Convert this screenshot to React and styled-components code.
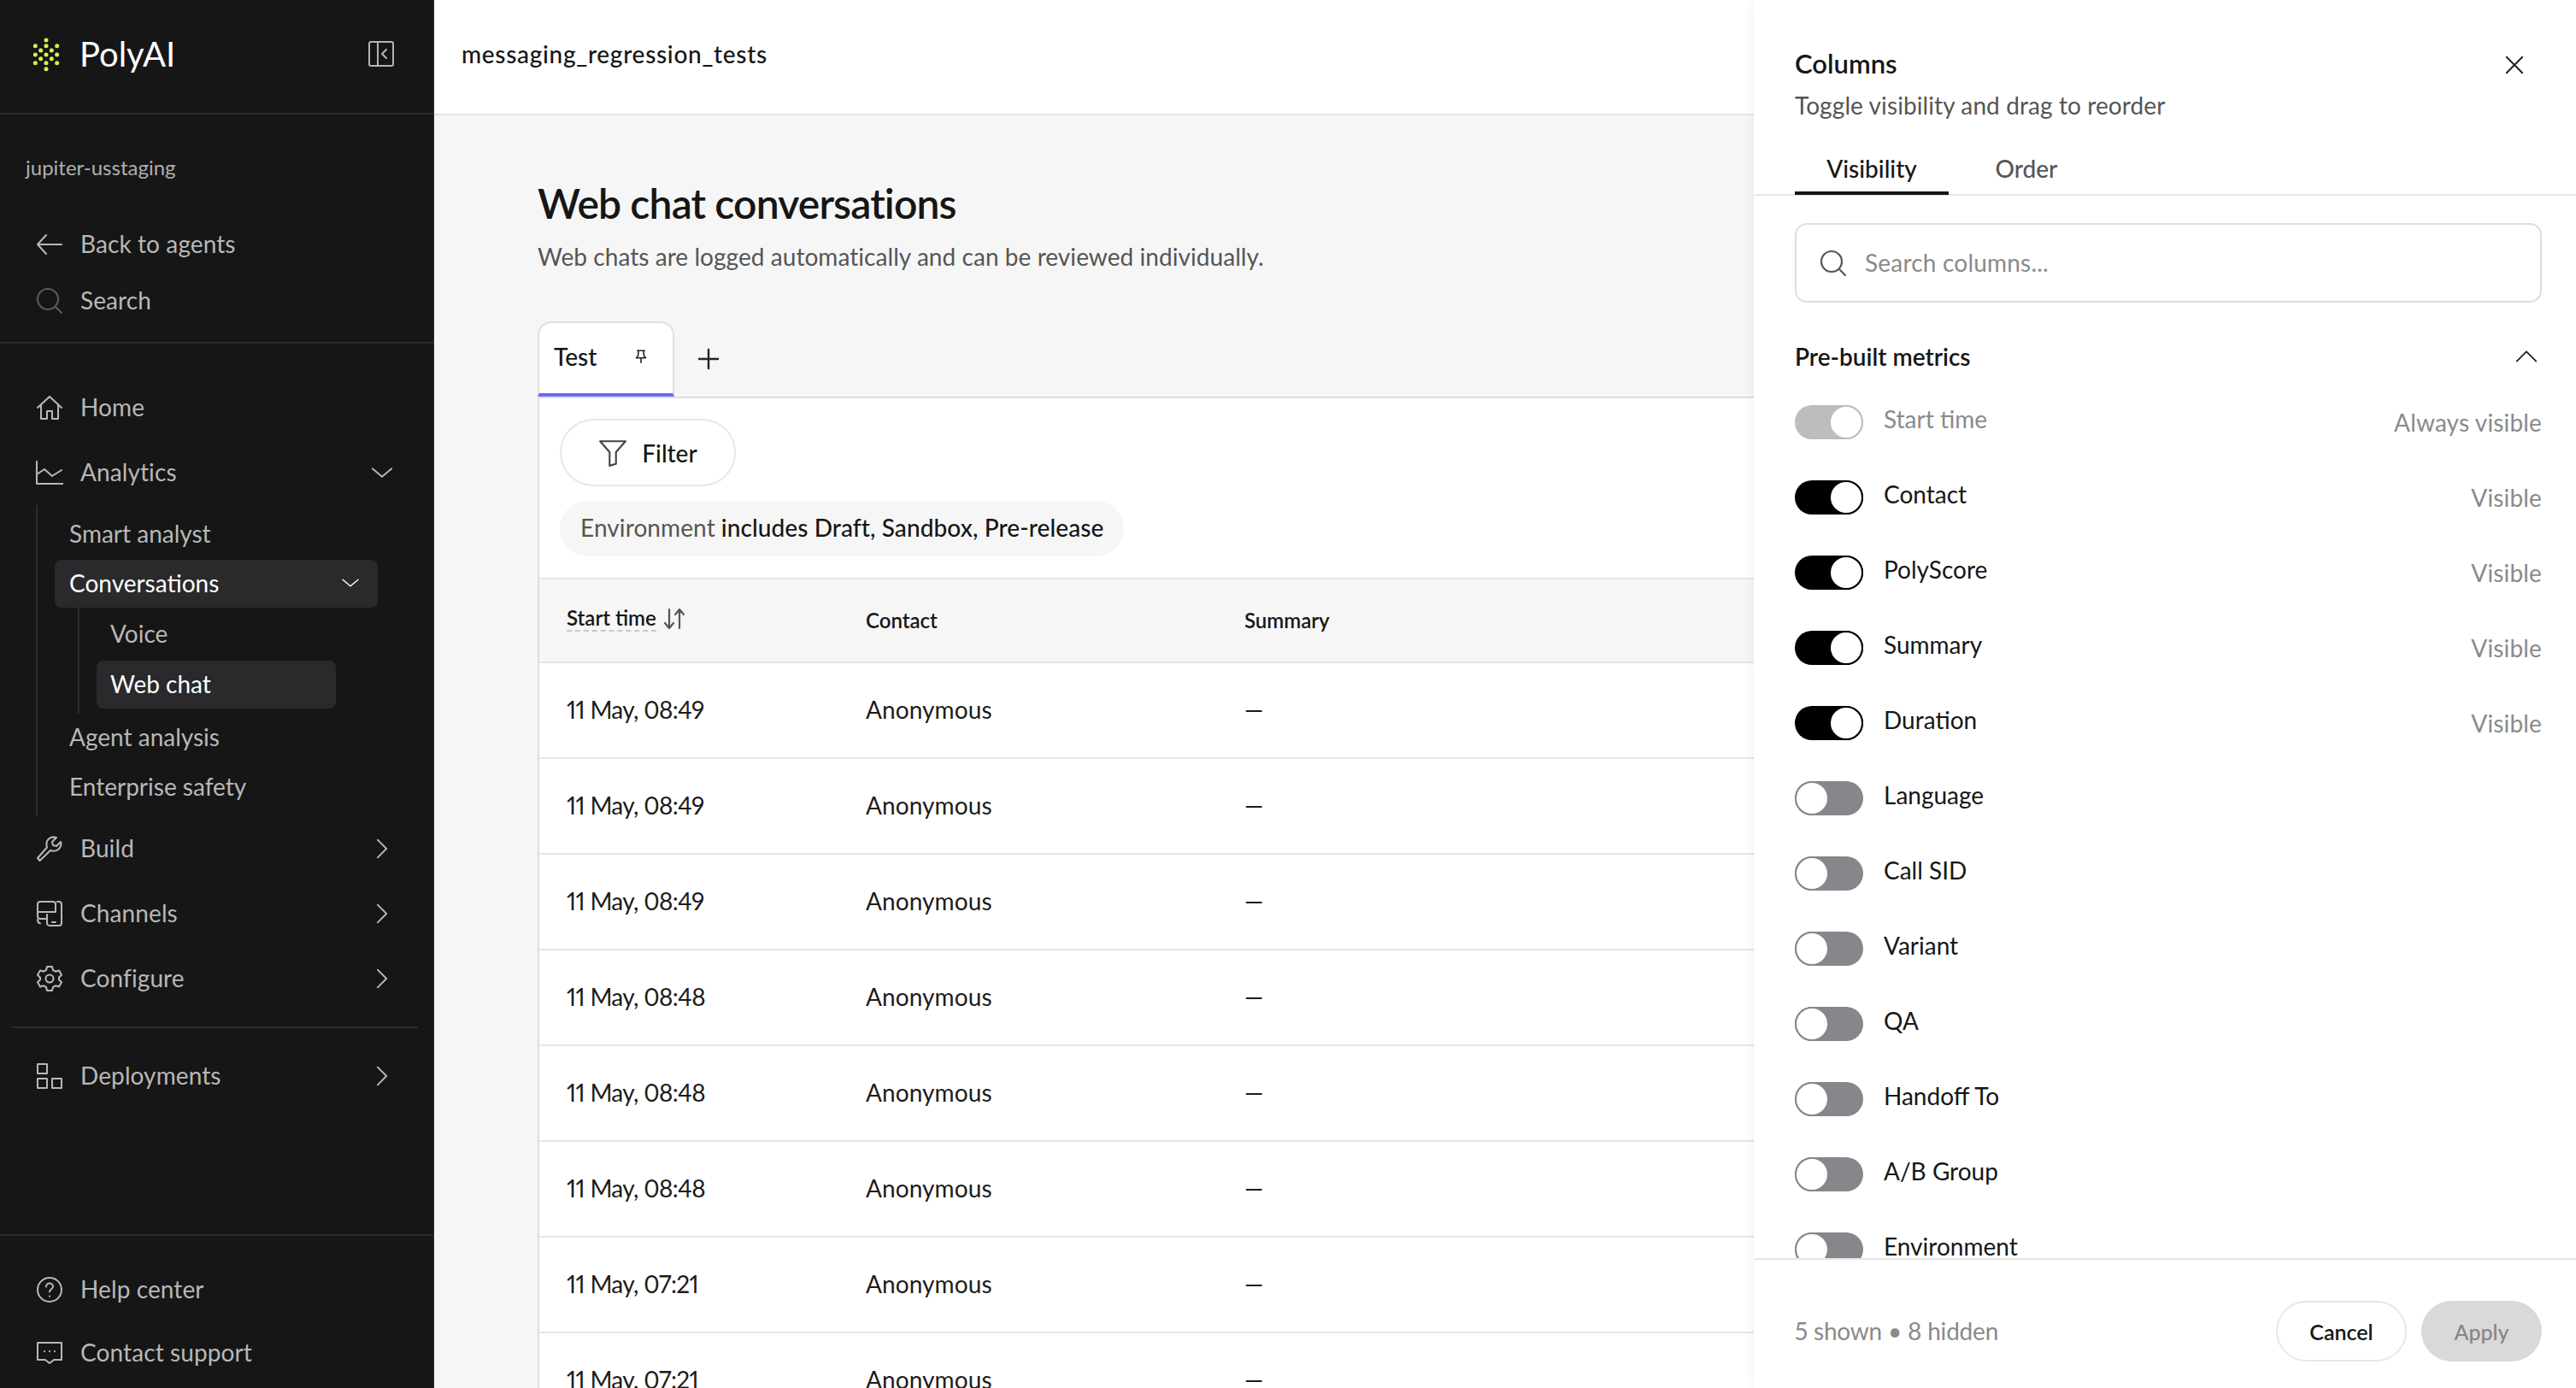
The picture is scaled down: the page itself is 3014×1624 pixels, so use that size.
import React from "react";
import styled, { createGlobalStyle } from "styled-components";

const FONT = `Lato, "Open Sans", "Liberation Sans", sans-serif`;

const Global = createGlobalStyle`
  html, body { margin: 0; padding: 0; width: 3014px; height: 1624px; overflow: hidden; background: #f6f6f6; }
  * { box-sizing: border-box; }
  body { font-family: ${FONT}; color: #161616; -webkit-font-smoothing: antialiased; font-feature-settings: "pnum" 1; }
`;

const Page = styled.div`
  position: relative;
  display: flex;
  width: 3014px;
  height: 1624px;
  overflow: hidden;
`;

/* ---------- sidebar ---------- */
const Sidebar = styled.aside`
  flex: 0 0 508px;
  height: 1624px;
  display: flex;
  flex-direction: column;
  background: #161616;
  border-right: 1px solid #2a2a2a;
  color: #b8b8b8;
`;
const Brand = styled.div`
  height: 134px;
  flex: none;
  display: flex;
  align-items: center;
  padding: 0 45px 6px 30px;
  border-bottom: 2px solid #2b2b2b;
`;
const BrandName = styled.span`
  margin-left: 13px;
  font-size: 40px;
  line-height: 48px;
  color: #fff;
  flex: 1;
`;
const Workspace = styled.div`
  padding: 46px 30px 0;
  font-size: 24px;
  line-height: 32px;
  color: #b0b0b0;
  height: 119px;
  flex: none;
`;
const TopNav = styled.div`
  flex: none;
  border-bottom: 2px solid #2b2b2b;
  padding-bottom: 15px;
`;
const NavRow = styled.div`
  height: ${(p) => p.$h || 76}px;
  flex: none;
  display: flex;
  align-items: center;
  padding: 0 45px 0 42px;
  font-size: 28px;
  letter-spacing: 0.1px;
  svg.lead { flex: none; margin-right: 20px; }
  span { flex: 1; padding-bottom: 3px; }
`;
const MainNav = styled.nav`
  flex: none;
  padding-top: 37px;
`;
const SubList = styled.div`
  margin-left: 42px;
  padding: 6px 0 4px 20px;
  border-left: 2px solid #2b2b2b;
  width: 402px;
`;
const SubItem = styled.div`
  width: ${(p) => (p.$inner ? 280 : 378)}px;
  height: 56px;
  margin-bottom: ${(p) => (p.$gap === undefined ? 2 : p.$gap)}px;
  display: flex;
  align-items: center;
  justify-content: space-between;
  padding: 0 20px 3px ${(p) => (p.$inner ? 16 : 17)}px;
  border-radius: 8px;
  background: ${(p) => (p.$active ? "#2a2a2c" : "transparent")};
  color: ${(p) => (p.$active ? "#fff" : "#b8b8b8")};
  font-size: 28px;
`;
const InnerList = styled.div`
  margin-left: 27px;
  padding: 3px 0 6px 20px;
  border-left: 2px solid #2b2b2b;
`;
const NavDivider = styled.div`
  height: 2px;
  margin: 18px 18px 18px 14px;
  background: #2b2b2b;
`;
const FootNav = styled.div`
  margin-top: auto;
  padding: 26px 0 4px;
  border-top: 2px solid #2b2b2b;
`;

/* ---------- main ---------- */
const Main = styled.main`
  flex: 1;
  min-width: 0;
  display: flex;
  flex-direction: column;
`;
const TopBar = styled.header`
  height: 135px;
  flex: none;
  display: flex;
  align-items: center;
  padding: 0 0 8px 32px;
  background: #fff;
  border-bottom: 2px solid #e4e4e4;
  font-size: 28px;
  font-weight: 500;
  letter-spacing: 0.7px;
`;
const Content = styled.div`
  padding: 73px 0 0 121px;
  flex: 1;
  min-height: 0;
`;
const Title = styled.h1`
  margin: 0;
  font-size: 48px;
  line-height: 60px;
  font-weight: 600;
  letter-spacing: -0.85px;
  color: #161616;
`;
const Lead = styled.p`
  margin: 14px 0 0;
  font-size: 28px;
  line-height: 36px;
  color: #555;
  letter-spacing: 0.06px;
`;
const TabBar = styled.div`
  margin-top: 58px;
  height: 90px;
  display: flex;
  align-items: flex-start;
  border-bottom: 2px solid #dedede;
`;
const ViewTab = styled.div`
  width: 160px;
  height: 88px;
  display: flex;
  align-items: center;
  justify-content: space-between;
  padding: 0 30px 4px 17px;
  background: #fff;
  border: 2px solid #dedede;
  border-bottom: 4px solid #6b68f5;
  border-radius: 16px 16px 0 0;
  font-size: 28px;
  font-weight: 500;
`;
const AddTab = styled.div`
  height: 88px;
  margin-left: 27px;
  display: flex;
  align-items: center;
  color: #222;
`;
const Card = styled.section`
  background: #fff;
  border-left: 2px solid #dedede;
  height: 1200px;
`;
const FilterArea = styled.div`
  padding: 24px 24px 25px;
  display: flex;
  flex-direction: column;
  align-items: flex-start;
  gap: 17px;
  border-bottom: 2px solid #e6e6e6;
`;
const FilterButton = styled.button`
  height: 79px;
  width: 206px;
  display: flex;
  align-items: center;
  justify-content: center;
  gap: 17px;
  border: 2px solid #e8e8e8;
  border-radius: 40px;
  background: #fff;
  font: 500 28px ${FONT};
  color: #161616;
`;
const Chip = styled.div`
  height: 65px;
  display: flex;
  align-items: center;
  gap: 7px;
  padding: 0 24px 3px;
  border-radius: 33px;
  background: #f6f6f6;
  font-size: 28px;
  color: #555;
  letter-spacing: 0.1px;
  b { font-weight: 500; color: #161616; }
`;
const HeadRow = styled.div`
  height: 98px;
  display: grid;
  grid-template-columns: 350px 443px 1fr;
  align-items: center;
  padding: 0 0 1px 32px;
  background: #f6f6f6;
  border-bottom: 2px solid #e6e6e6;
  font-size: 24px;
  font-weight: 600;
`;
const SortHead = styled.div`
  display: flex;
  align-items: center;
  gap: 8px;
  margin-top: -4px;
  span { border-bottom: 2px dashed #c8c8c8; line-height: 28px; }
`;
const Row = styled.div`
  height: 112px;
  display: grid;
  grid-template-columns: 350px 443px 1fr;
  align-items: center;
  padding: 0 0 3px 32px;
  border-bottom: 2px solid #e6e6e6;
  font-size: 28px;
  letter-spacing: 0.1px;
  color: #1c1c1c;
`;
const TimeCell = styled.div`
  letter-spacing: -0.65px;
`;

/* ---------- drawer ---------- */
const Drawer = styled.aside`
  position: absolute;
  top: 0;
  right: 0;
  bottom: 0;
  width: 962px;
  display: flex;
  flex-direction: column;
  background: #fff;
  box-shadow: 0 0 12px rgba(0, 0, 0, 0.07);
`;
const DrawerHead = styled.div`
  flex: none;
  padding: 55px 40px 0 48px;
`;
const DrawerTitleRow = styled.div`
  display: flex;
  align-items: center;
  justify-content: space-between;
  height: 38px;
`;
const DrawerTitle = styled.h2`
  margin: 0;
  font-size: 31px;
  font-weight: 600;
  line-height: 38px;
  color: #161616;
`;
const CloseIcon = styled.svg`
  margin: 3px 21px 0 0;
`;
const DrawerLead = styled.p`
  margin: 12px 0 0;
  font-size: 28px;
  line-height: 36px;
  color: #555;
  letter-spacing: 0.1px;
`;
const DrawerTabs = styled.div`
  flex: none;
  height: 88px;
  padding: 29px 0 0 48px;
  display: flex;
  border-bottom: 2px solid #e6e6e6;
`;
const DrawerTab = styled.div`
  width: ${(p) => p.$w}px;
  height: 58px;
  display: flex;
  align-items: center;
  justify-content: center;
  border-bottom: 4px solid ${(p) => (p.$active ? "#161616" : "transparent")};
  font-size: 28px;
  font-weight: 500;
  color: ${(p) => (p.$active ? "#161616" : "#555")};
`;
const DrawerBody = styled.div`
  flex: 1;
  min-height: 0;
  overflow: hidden;
  padding: 32px 40px 0 48px;
`;
const SearchBox = styled.div`
  height: 93px;
  display: flex;
  align-items: center;
  gap: 21px;
  padding: 0 27px;
  border: 2px solid #dedede;
  border-radius: 14px;
  font-size: 28px;
  color: #8a8a8a;
  letter-spacing: 0.2px;
`;
const SearchText = styled.span`
  padding-bottom: 2px;
`;
const SectionHead = styled.div`
  margin-top: 43px;
  height: 40px;
  display: flex;
  align-items: center;
  justify-content: space-between;
  padding-right: 3px;
  font-size: 28px;
  font-weight: 600;
  color: #161616;
`;
const ToggleList = styled.div`
  margin-top: 13px;
`;
const ToggleRow = styled.div`
  height: 88px;
  display: flex;
  align-items: center;
`;
const Track = styled.span`
  flex: none;
  position: relative;
  width: 80px;
  height: 40px;
  border-radius: 20px;
  background: ${(p) => (p.$state === "on" ? "#000" : p.$state === "locked" ? "#bdbdbd" : "#87878b")};
`;
const Knob = styled.span`
  position: absolute;
  top: 0;
  ${(p) => (p.$state === "off" ? "left: 0" : "right: 0")};
  width: 40px;
  height: 40px;
  border-radius: 50%;
  background: #fff;
  border: 2px solid ${(p) => (p.$state === "on" ? "#000" : p.$state === "locked" ? "#bdbdbd" : "#87878b")};
`;
const ToggleLabel = styled.span`
  flex: 1;
  margin-left: 24px;
  padding-bottom: 9px;
  font-size: 28px;
  line-height: 36px;
  color: ${(p) => (p.$state === "locked" ? "#8a8a8a" : "#161616")};
`;
const ToggleStatus = styled.span`
  font-size: 28px;
  color: #8a8a8a;
  letter-spacing: 0.15px;
`;
const DrawerFoot = styled.div`
  flex: none;
  height: 152px;
  display: flex;
  align-items: flex-start;
  padding: 48px 40px 0 48px;
  border-top: 2px solid #e6e6e6;
  background: #fff;
`;
const FootCount = styled.span`
  flex: 1;
  line-height: 71px;
  font-size: 28px;
  letter-spacing: -0.2px;
  color: #8a8a8a;
`;
const CancelButton = styled.button`
  width: 153px;
  height: 71px;
  border: 2px solid #e8e8e8;
  border-radius: 36px;
  background: #fff;
  font: 600 25px ${FONT};
  color: #161616;
`;
const ApplyButton = styled.button`
  width: 141px;
  height: 71px;
  margin-left: 17px;
  border: 0;
  border-radius: 36px;
  background: #d9d9d9;
  font: 500 25px ${FONT};
  color: #858585;
`;

/* ---------- icons ---------- */
const Ico = ({ size = 32, sw = 1.5, children, ...r }) => (
  <svg className="lead" width={size} height={size} viewBox="0 0 32 32" fill="none" stroke="currentColor" strokeWidth={sw * 1.35} strokeLinecap="round" strokeLinejoin="round" {...r}>
    {children}
  </svg>
);
const ChevSvg = styled.svg`
  flex: none;
`;
const Chev = ({ dir = "right", size = 32, color }) => (
  <ChevSvg width={size} height={size} viewBox="0 0 32 32" fill="none" stroke={color || "currentColor"} strokeWidth="2" strokeLinecap="round" strokeLinejoin="round">
    {dir === "right" && <path d="M10.5 5l11 11-11 11" />}
    {dir === "down" && <path d="M4 11l12 10 12-10" />}
    {dir === "up" && <path d="M4 22L16 10l12 12" />}
  </ChevSvg>
);
const logoDots = [[72,27],[34,47],[72,47],[110,47],[53,63],[91,63],[34,78],[72,78],[110,78],[53,92],[91,92],[34,107],[72,107],[110,107],[72,128]];
const LogoSvg = styled.svg`
  flex: none;
`;
const Logo = () => (
  <LogoSvg width="50" height="50" viewBox="0 0 150 150" fill="#d6f24a">
    {logoDots.map(([x, y]) => <circle key={`${x}-${y}`} cx={x} cy={y} r="7.5" />)}
  </LogoSvg>
);
const Collapse = () => (
  <LogoSvg width="32" height="32" viewBox="0 0 32 32" fill="none" stroke="#b4b4b4" strokeWidth="2" strokeLinejoin="round" strokeLinecap="round">
    <rect x="2" y="2" width="28" height="28" rx="2" />
    <path d="M12 2v28M22 11l-5 5 5 5" />
  </LogoSvg>
);
const icons = {
  back: <Ico><path d="M30 16H2M12 5L2 16l10 11" /></Ico>,
  search: <Ico stroke="#5c5c5c"><circle cx="14" cy="14" r="12" /><path d="M23 23l7 7" /></Ico>,
  home: <Ico><path d="M2 16L16 3l14 13M6 13v16h7v-9h6v9h7V13" /></Ico>,
  chart: <Ico><path d="M1 3v26h31M1 18l9-6 9 8 11-7" /></Ico>,
  build: <Ico><path d="M2 27l2.5 3L17 18c4 1.5 9 .5 11-3s1.5-6 1-7l-5 5-4-1-1-4 5-5c-3-1-7-.5-9.5 2s-2.500 6-1.500 9.500z" /></Ico>,
  channels: <Ico><path d="M12 22H5c-1.700 0-3-1.300-3-3V5c0-1.700 1.300-3 3-3h15c1.700 0 3 1.300 3 3v9H2" /><path d="M25 2h2c1.700 0 3 1.300 3 3v22c0 1.700-1.300 3-3 3H16c-1.700 0-3-1.300-3-3V17M19 26h4M2 23c0 2 1 4 3 4.500" /></Ico>,
  gear: <Ico><path d="M13 2h6l1 4 3 1.700 4-1.200 3 5.200-3 3v2.600l3 3-3 5.200-4-1.200-3 1.700-1 4h-6l-1-4-3-1.700-4 1.200-3-5.200 3-3v-2.600l-3-3 3-5.200 4 1.200 3-1.700z" /><circle cx="16" cy="16" r="4.500" /></Ico>,
  deploy: <Ico><rect x="2" y="2" width="11" height="11" /><rect x="2" y="19" width="11" height="11" /><rect x="19" y="19" width="11" height="11" /></Ico>,
  help: <Ico><circle cx="16" cy="16" r="14" /><path d="M12 12.500c0-2.500 2-4 4-4s4 1.500 4 3.700c0 3.300-4 3.300-4 6.300M16 23.500v.2" /></Ico>,
  support: <Ico><path d="M2 4h28v20H21l-5 4-5-4H2zM10 14v.2M16 14v.2M22 14v.2" /></Ico>,
};

const toggles = [
  ["Start time", "locked", "Always visible"],
  ["Contact", "on", "Visible"],
  ["PolyScore", "on", "Visible"],
  ["Summary", "on", "Visible"],
  ["Duration", "on", "Visible"],
  ["Language", "off"],
  ["Call SID", "off"],
  ["Variant", "off"],
  ["QA", "off"],
  ["Handoff To", "off"],
  ["A/B Group", "off"],
  ["Environment", "off"],
];
const times = ["11 May, 08:49", "11 May, 08:49", "11 May, 08:49", "11 May, 08:48", "11 May, 08:48", "11 May, 08:48", "11 May, 07:21", "11 May, 07:21"];

const Nav = ({ icon, label, chev, h }) => (
  <NavRow $h={h}>
    {icons[icon]}
    <span>{label}</span>
    {chev && <Chev dir={chev} size={30} />}
  </NavRow>
);

export default function App() {
  return (
    <Page>
      <Global />
      <Sidebar>
        <Brand>
          <Logo />
          <BrandName>PolyAI</BrandName>
          <Collapse />
        </Brand>
        <Workspace>jupiter-usstaging</Workspace>
        <TopNav>
          <Nav icon="back" label="Back to agents" h={66} />
          <Nav icon="search" label="Search" h={66} />
        </TopNav>
        <MainNav>
          <Nav icon="home" label="Home" />
          <Nav icon="chart" label="Analytics" chev="down" />
          <SubList>
            <SubItem>Smart analyst</SubItem>
            <SubItem $active $gap={0}>Conversations <Chev dir="down" size={24} color="#fff" /></SubItem>
            <InnerList>
              <SubItem $inner $gap={3}>Voice</SubItem>
              <SubItem $inner $active $gap={0}>Web chat</SubItem>
            </InnerList>
            <SubItem>Agent analysis</SubItem>
            <SubItem>Enterprise safety</SubItem>
          </SubList>
          <Nav icon="build" label="Build" chev="right" />
          <Nav icon="channels" label="Channels" chev="right" />
          <Nav icon="gear" label="Configure" chev="right" />
          <NavDivider />
          <Nav icon="deploy" label="Deployments" chev="right" />
        </MainNav>
        <FootNav>
          <Nav icon="help" label="Help center" h={74} />
          <Nav icon="support" label="Contact support" h={74} />
        </FootNav>
      </Sidebar>

      <Main>
        <TopBar>messaging_regression_tests</TopBar>
        <Content>
          <Title>Web chat conversations</Title>
          <Lead>Web chats are logged automatically and can be reviewed individually.</Lead>
          <TabBar>
            <ViewTab>
              Test
              <svg width="14" height="17" viewBox="0 0 16 20" fill="none" stroke="#222" strokeWidth="1.900" strokeLinejoin="round" strokeLinecap="round">
                <path d="M3 1.500h10M4.500 1.500l-.5 7-2.500 3h13l-2.500-3-.5-7M8 11.500V18" />
              </svg>
            </ViewTab>
            <AddTab>
              <svg width="26" height="26" viewBox="0 0 26 26" fill="none" stroke="currentColor" strokeWidth="2.400" strokeLinecap="round"><path d="M13 2v22M2 13h22" /></svg>
            </AddTab>
          </TabBar>
          <Card>
            <FilterArea>
              <FilterButton>
                <svg width="34" height="34" viewBox="0 0 32 32" fill="none" stroke="#444" strokeWidth="2" strokeLinejoin="round"><path d="M2 3h28L19.500 15v13l-7 2V15z" /></svg>
                Filter
              </FilterButton>
              <Chip>Environment <b>includes Draft, Sandbox, Pre-release</b></Chip>
            </FilterArea>
            <HeadRow>
              <SortHead>
                <span>Start time</span>
                <svg width="26" height="28" viewBox="0 0 26 28" fill="none" stroke="#555" strokeWidth="2.200" strokeLinecap="round" strokeLinejoin="round"><path d="M7 3v22M2 19l5 6 5-6M19 25V3M14 9l5-6 5 6" /></svg>
              </SortHead>
              <div>Contact</div>
              <div>Summary</div>
            </HeadRow>
            {times.map((t, i) => (
              <Row key={i}>
                <TimeCell>{t}</TimeCell>
                <div>Anonymous</div>
                <div>—</div>
              </Row>
            ))}
          </Card>
        </Content>
      </Main>

      <Drawer>
        <DrawerHead>
          <DrawerTitleRow>
            <DrawerTitle>Columns</DrawerTitle>
            <CloseIcon width="22" height="22" viewBox="0 0 24 24" fill="none" stroke="#222" strokeWidth="2.200" strokeLinecap="round"><path d="M2 2l20 20M22 2L2 22" /></CloseIcon>
          </DrawerTitleRow>
          <DrawerLead>Toggle visibility and drag to reorder</DrawerLead>
        </DrawerHead>
        <DrawerTabs>
          <DrawerTab $active $w={180}>Visibility</DrawerTab>
          <DrawerTab $w={182}>Order</DrawerTab>
        </DrawerTabs>
        <DrawerBody>
          <SearchBox>
            <ChevSvg width="32" height="32" viewBox="0 0 32 32" fill="none" stroke="#555" strokeWidth="2.200" strokeLinecap="round"><circle cx="14" cy="14" r="12" /><path d="M23 23l7 7" /></ChevSvg>
            <SearchText>Search columns...</SearchText>
          </SearchBox>
          <SectionHead>
            Pre-built metrics
            <Chev dir="up" size={30} color="#222" />
          </SectionHead>
          <ToggleList>
            {toggles.map(([label, state, status]) => (
              <ToggleRow key={label}>
                <Track $state={state}><Knob $state={state} /></Track>
                <ToggleLabel $state={state}>{label}</ToggleLabel>
                {status && <ToggleStatus>{status}</ToggleStatus>}
              </ToggleRow>
            ))}
          </ToggleList>
        </DrawerBody>
        <DrawerFoot>
          <FootCount>5 shown • 8 hidden</FootCount>
          <CancelButton>Cancel</CancelButton>
          <ApplyButton>Apply</ApplyButton>
        </DrawerFoot>
      </Drawer>
    </Page>
  );
}
